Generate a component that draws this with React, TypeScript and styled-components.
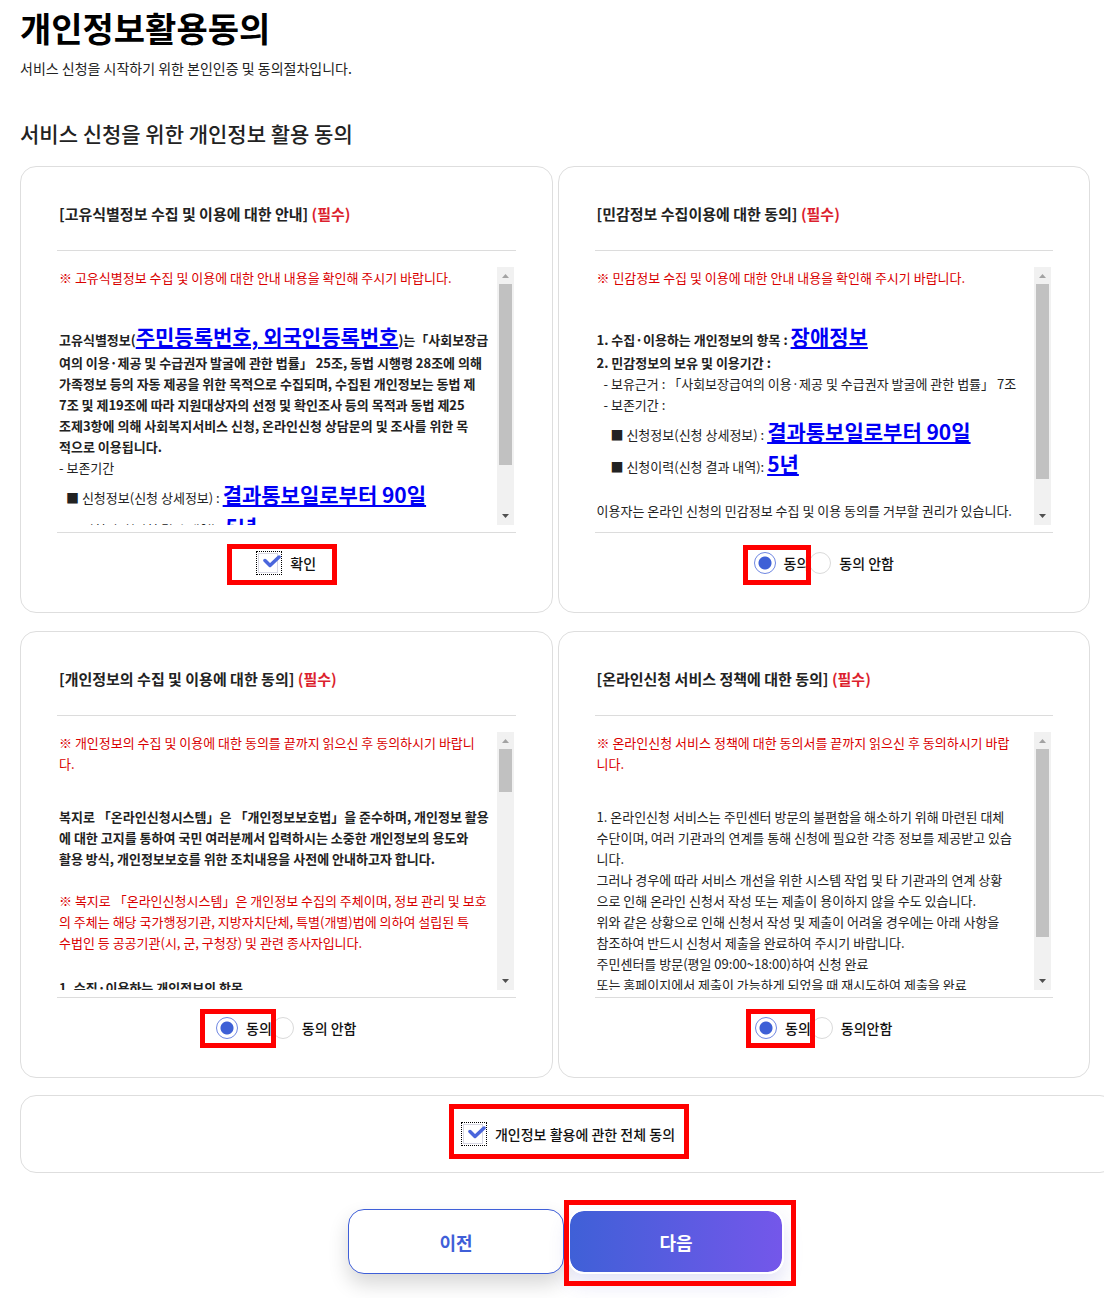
import React, { useState } from 'react';
import styled, { createGlobalStyle, css } from 'styled-components';

const GlobalStyle = createGlobalStyle`
  *, *::before, *::after { box-sizing: border-box; }
  body {
    margin: 0;
    background: #fff;
    color: #222;
    font-family: "Noto Sans CJK KR", "Noto Sans", sans-serif;
    font-size: 14px;
    line-height: 21px;
  }
  h1, h2, h3, p { margin: 0; }
`;

const Page = styled.main`
  padding: 8px 14px 24px 20px;
  overflow-x: clip;
`;

const PageTitle = styled.h1`
  color: #000;
  font-size: 34px;
  font-weight: 700;
  line-height: 40px;
`;

const Lead = styled.p`
  margin-top: 10px;
`;

const SectionTitle = styled.h2`
  margin: 39px 0 18px;
  font-size: 21px;
  font-weight: 500;
  line-height: 30px;
`;

const CardGrid = styled.div`
  display: grid;
  grid-template-columns: repeat(2, minmax(0, 1fr));
  gap: 18px 5px;
`;

const Card = styled.section`
  padding: 0 36px 37px;
  border: 1px solid #dedede;
  border-radius: 16px;
`;

const CardTitle = styled.h3`
  padding: 35px 0 24px 2px;
  border-bottom: 1px solid #dcdcdc;
  font-size: 15px;
  font-weight: 700;
  line-height: 24px;
`;

const Required = styled.span`
  color: #dc1f2e;
`;

const TermsFrame = styled.div`
  display: flex;
  margin-top: 16px;
  padding: 0 2px 7px;
  border-bottom: 1px solid #dcdcdc;
`;

const Terms = styled.div`
  flex: 1;
  min-width: 0;
  height: 258px;
  overflow-x: hidden;
  overflow-y: auto;
  scrollbar-width: none;
  white-space: nowrap;
  font-size: 13px;
`;

const Notice = styled.p<{ $spaced?: boolean }>`
  color: #d90000;
  ${({ $spaced }) => $spaced && css`margin-bottom: 32px;`}
`;

const Paragraph = styled.p<{ $bold?: boolean; $indent?: number }>`
  font-weight: ${({ $bold }) => ($bold ? 700 : 400)};
  padding-left: ${({ $indent = 0 }) => $indent}px;
`;

const Blank = styled.div<{ $tall?: boolean }>`
  height: ${({ $tall }) => ($tall ? 24 : 21)}px;
`;

const Strong = styled.strong`
  color: #0000f5;
  font-size: 21px;
  font-weight: 700;
  line-height: 32px;
  text-decoration: underline;
`;

const Scrollbar = styled.div`
  flex: none;
  display: flex;
  flex-direction: column;
  width: 17px;
  background: #f1f1f1;
`;

const Arrow = styled.svg`
  flex: none;
  display: block;
  width: 17px;
  height: 17px;
`;

const Track = styled.div`
  flex: 1;
  padding: 0 2px;
`;

const Thumb = styled.div`
  background: #c1c1c1;
`;

const Choices = styled.div`
  display: flex;
  justify-content: center;
  margin-top: 18px;
`;

const ChoiceLabel = styled.label`
  position: relative;
  display: inline-flex;
  align-items: center;
  gap: 8px;
  height: 24px;
  font-weight: 500;
  color: #111;
  cursor: pointer;
`;

const Radio = styled.input`
  appearance: none;
  width: 22px;
  height: 22px;
  margin: 0;
  border: 1px solid #dadada;
  border-radius: 50%;
  background: #fff;

  &:checked {
    border-color: #6f87e2;
    background: radial-gradient(circle, #3e60d6 0 6px, #fff 7px);
  }
`;

const CheckWrap = styled.span`
  display: inline-grid;
  width: 26px;
  height: 24px;
  border: 1px dotted #000;

  > * { grid-area: 1 / 1; }
`;

const Checkbox = styled.input`
  appearance: none;
  width: 20px;
  height: 20px;
  margin: 1px;
  border: 1px solid #d8d8e4;
  background: #fff;
  outline: none;

  & + svg { visibility: hidden; }
  &:checked + svg { visibility: visible; }
`;

const Tick = styled.svg`
  width: 24px;
  height: 22px;
  pointer-events: none;
`;

const Highlight = styled.span<{ $inset: string }>`
  position: absolute;
  z-index: 1;
  inset: ${({ $inset }) => $inset};
  border: 5px solid #f00;
  pointer-events: none;
`;

const AllPanel = styled.div`
  display: flex;
  justify-content: center;
  align-items: center;
  height: 78px;
  margin: 17px -26px 0 0;
  border: 1px solid #dedede;
  border-radius: 16px;
`;

const Actions = styled.div`
  display: flex;
  justify-content: center;
  gap: 4px;
  margin-top: 36px;
  padding-left: 22px;
`;

const ActionSlot = styled.div`
  position: relative;
  display: flex;
`;

const ActionButton = styled.button<{ $primary?: boolean }>`
  width: 216px;
  height: 65px;
  padding: 0;
  border: 1px solid #3f5fd8;
  border-radius: 16px;
  background: #fff;
  box-shadow: 0 10px 20px rgba(0, 0, 0, 0.16);
  color: #3f5fd8;
  font: 700 18px/26px "Noto Sans CJK KR", "Noto Sans", sans-serif;
  cursor: pointer;

  ${({ $primary }) => $primary && css`
    border: 2px solid #fff;
    background: linear-gradient(90deg, #3f60d7, #7457ea) padding-box;
    box-shadow: 0 10px 20px rgba(80, 80, 200, 0.16);
    color: #fff;
  `}
`;

function ScrollTerms({ thumb, children }: { thumb: number; children: React.ReactNode }) {
  return (
    <TermsFrame>
      <Terms tabIndex={0}>{children}</Terms>
      <Scrollbar aria-hidden="true">
        <Arrow viewBox="0 0 17 17"><path d="M5 11h7L8.5 7z" fill="#a3a3a3" /></Arrow>
        <Track><Thumb style={{ height: `${thumb}%` }} /></Track>
        <Arrow viewBox="0 0 17 17"><path d="M5 6h7L8.5 10z" fill="#505050" /></Arrow>
      </Scrollbar>
    </TermsFrame>
  );
}

function CheckOption({ label, inset }: { label: string; inset: string }) {
  const [checked, setChecked] = useState(true);
  return (
    <ChoiceLabel>
      <CheckWrap>
        <Checkbox type="checkbox" checked={checked} onChange={(e) => setChecked(e.target.checked)} />
        <Tick viewBox="0 0 24 22" aria-hidden="true">
          <path d="M8 8.5L13 13.5L22 5" fill="none" stroke="#4a66dc" strokeWidth="3.5" strokeLinecap="round" strokeLinejoin="round" />
        </Tick>
      </CheckWrap>
      {label}
      <Highlight $inset={inset} />
    </ChoiceLabel>
  );
}

function RadioOptions({ name, decline, inset }: { name: string; decline: string; inset: string }) {
  return (
    <Choices>
      <ChoiceLabel>
        <Radio type="radio" name={name} defaultChecked />
        동의
        <Highlight $inset={inset} />
      </ChoiceLabel>
      <ChoiceLabel>
        <Radio type="radio" name={name} />
        {decline}
      </ChoiceLabel>
    </Choices>
  );
}

function Title({ children }: { children: React.ReactNode }) {
  return <CardTitle>[{children}] <Required>(필수)</Required></CardTitle>;
}

export default function App() {
  return (
    <>
      <GlobalStyle />
      <Page>
        <PageTitle>개인정보활용동의</PageTitle>
        <Lead>서비스 신청을 시작하기 위한 본인인증 및 동의절차입니다.</Lead>
        <SectionTitle>서비스 신청을 위한 개인정보 활용 동의</SectionTitle>

        <CardGrid>
          <Card>
            <Title>고유식별정보 수집 및 이용에 대한 안내</Title>
            <ScrollTerms thumb={81}>
              <Notice $spaced>※ 고유식별정보 수집 및 이용에 대한 안내 내용을 확인해 주시기 바랍니다.</Notice>
              <Paragraph $bold>
                고유식별정보(<Strong>주민등록번호, 외국인등록번호</Strong>)는「사회보장급<br />
                여의 이용·제공 및 수급권자 발굴에 관한 법률」 25조, 동법 시행령 28조에 의해<br />
                가족정보 등의 자동 제공을 위한 목적으로 수집되며, 수집된 개인정보는 동법 제<br />
                7조 및 제19조에 따라 지원대상자의 선정 및 확인조사 등의 목적과 동법 제25<br />
                조제3항에 의해 사회복지서비스 신청, 온라인신청 상담문의 및 조사를 위한 목<br />
                적으로 이용됩니다.
              </Paragraph>
              <Paragraph>- 보존기간</Paragraph>
              <Paragraph $indent={7}>■ 신청정보(신청 상세정보) : <Strong>결과통보일로부터 90일</Strong></Paragraph>
              <Paragraph $indent={7}>■ 신청이력(신청 결과 내역) : <Strong>5년</Strong></Paragraph>
            </ScrollTerms>
            <Choices>
              <CheckOption label="확인" inset="-7px -21px -10px -29px" />
            </Choices>
          </Card>

          <Card>
            <Title>민감정보 수집이용에 대한 동의</Title>
            <ScrollTerms thumb={87}>
              <Notice $spaced>※ 민감정보 수집 및 이용에 대한 안내 내용을 확인해 주시기 바랍니다.</Notice>
              <Paragraph $bold>
                1. 수집·이용하는 개인정보의 항목 : <Strong>장애정보</Strong><br />
                2. 민감정보의 보유 및 이용기간 :
              </Paragraph>
              <Paragraph $indent={7}>
                - 보유근거 : 「사회보장급여의 이용·제공 및 수급권자 발굴에 관한 법률」 7조<br />
                - 보존기간 :
              </Paragraph>
              <Paragraph $indent={14}>■ 신청정보(신청 상세정보) : <Strong>결과통보일로부터 90일</Strong></Paragraph>
              <Paragraph $indent={14}>■ 신청이력(신청 결과 내역): <Strong>5년</Strong></Paragraph>
              <Blank />
              <Paragraph>이용자는 온라인 신청의 민감정보 수집 및 이용 동의를 거부할 권리가 있습니다.</Paragraph>
            </ScrollTerms>
            <RadioOptions name="sensitive" decline="동의 안함" inset="-6px -2px -10px -11px" />
          </Card>

          <Card>
            <Title>개인정보의 수집 및 이용에 대한 동의</Title>
            <ScrollTerms thumb={19}>
              <Notice $spaced>
                ※ 개인정보의 수집 및 이용에 대한 동의를 끝까지 읽으신 후 동의하시기 바랍니<br />
                다.
              </Notice>
              <Paragraph $bold>
                복지로 「온라인신청시스템」은 「개인정보보호법」을 준수하며, 개인정보 활용<br />
                에 대한 고지를 통하여 국민 여러분께서 입력하시는 소중한 개인정보의 용도와<br />
                활용 방식, 개인정보보호를 위한 조치내용을 사전에 안내하고자 합니다.
              </Paragraph>
              <Blank />
              <Notice>
                ※ 복지로 「온라인신청시스템」은 개인정보 수집의 주체이며, 정보 관리 및 보호<br />
                의 주체는 해당 국가행정기관, 지방자치단체, 특별(개별)법에 의하여 설립된 특<br />
                수법인 등 공공기관(시, 군, 구청장) 및 관련 종사자입니다.
              </Notice>
              <Blank $tall />
              <Paragraph $bold>1. 수집·이용하는 개인정보의 항목</Paragraph>
            </ScrollTerms>
            <RadioOptions name="collection" decline="동의 안함" inset="-7px -4px -8px -16px" />
          </Card>

          <Card>
            <Title>온라인신청 서비스 정책에 대한 동의</Title>
            <ScrollTerms thumb={84}>
              <Notice $spaced>
                ※ 온라인신청 서비스 정책에 대한 동의서를 끝까지 읽으신 후 동의하시기 바랍<br />
                니다.
              </Notice>
              <Paragraph>
                1. 온라인신청 서비스는 주민센터 방문의 불편함을 해소하기 위해 마련된 대체<br />
                수단이며, 여러 기관과의 연계를 통해 신청에 필요한 각종 정보를 제공받고 있습<br />
                니다.<br />
                그러나 경우에 따라 서비스 개선을 위한 시스템 작업 및 타 기관과의 연계 상황<br />
                으로 인해 온라인 신청서 작성 또는 제출이 용이하지 않을 수도 있습니다.<br />
                위와 같은 상황으로 인해 신청서 작성 및 제출이 어려울 경우에는 아래 사항을<br />
                참조하여 반드시 신청서 제출을 완료하여 주시기 바랍니다.<br />
                주민센터를 방문(평일 09:00~18:00)하여 신청 완료<br />
                또는 홈페이지에서 제출이 가능하게 되었을 때 재시도하여 제출을 완료
              </Paragraph>
            </ScrollTerms>
            <RadioOptions name="policy" decline="동의안함" inset="-7px -4px -8px -9px" />
          </Card>
        </CardGrid>

        <AllPanel>
          <CheckOption label="개인정보 활용에 관한 전체 동의" inset="-18px -14px -13px -12px" />
        </AllPanel>

        <Actions>
          <ActionSlot><ActionButton type="button">이전</ActionButton></ActionSlot>
          <ActionSlot>
            <ActionButton type="button" $primary>다음</ActionButton>
            <Highlight $inset="-9px -12px -12px -4px" />
          </ActionSlot>
        </Actions>
      </Page>
    </>
  );
}
